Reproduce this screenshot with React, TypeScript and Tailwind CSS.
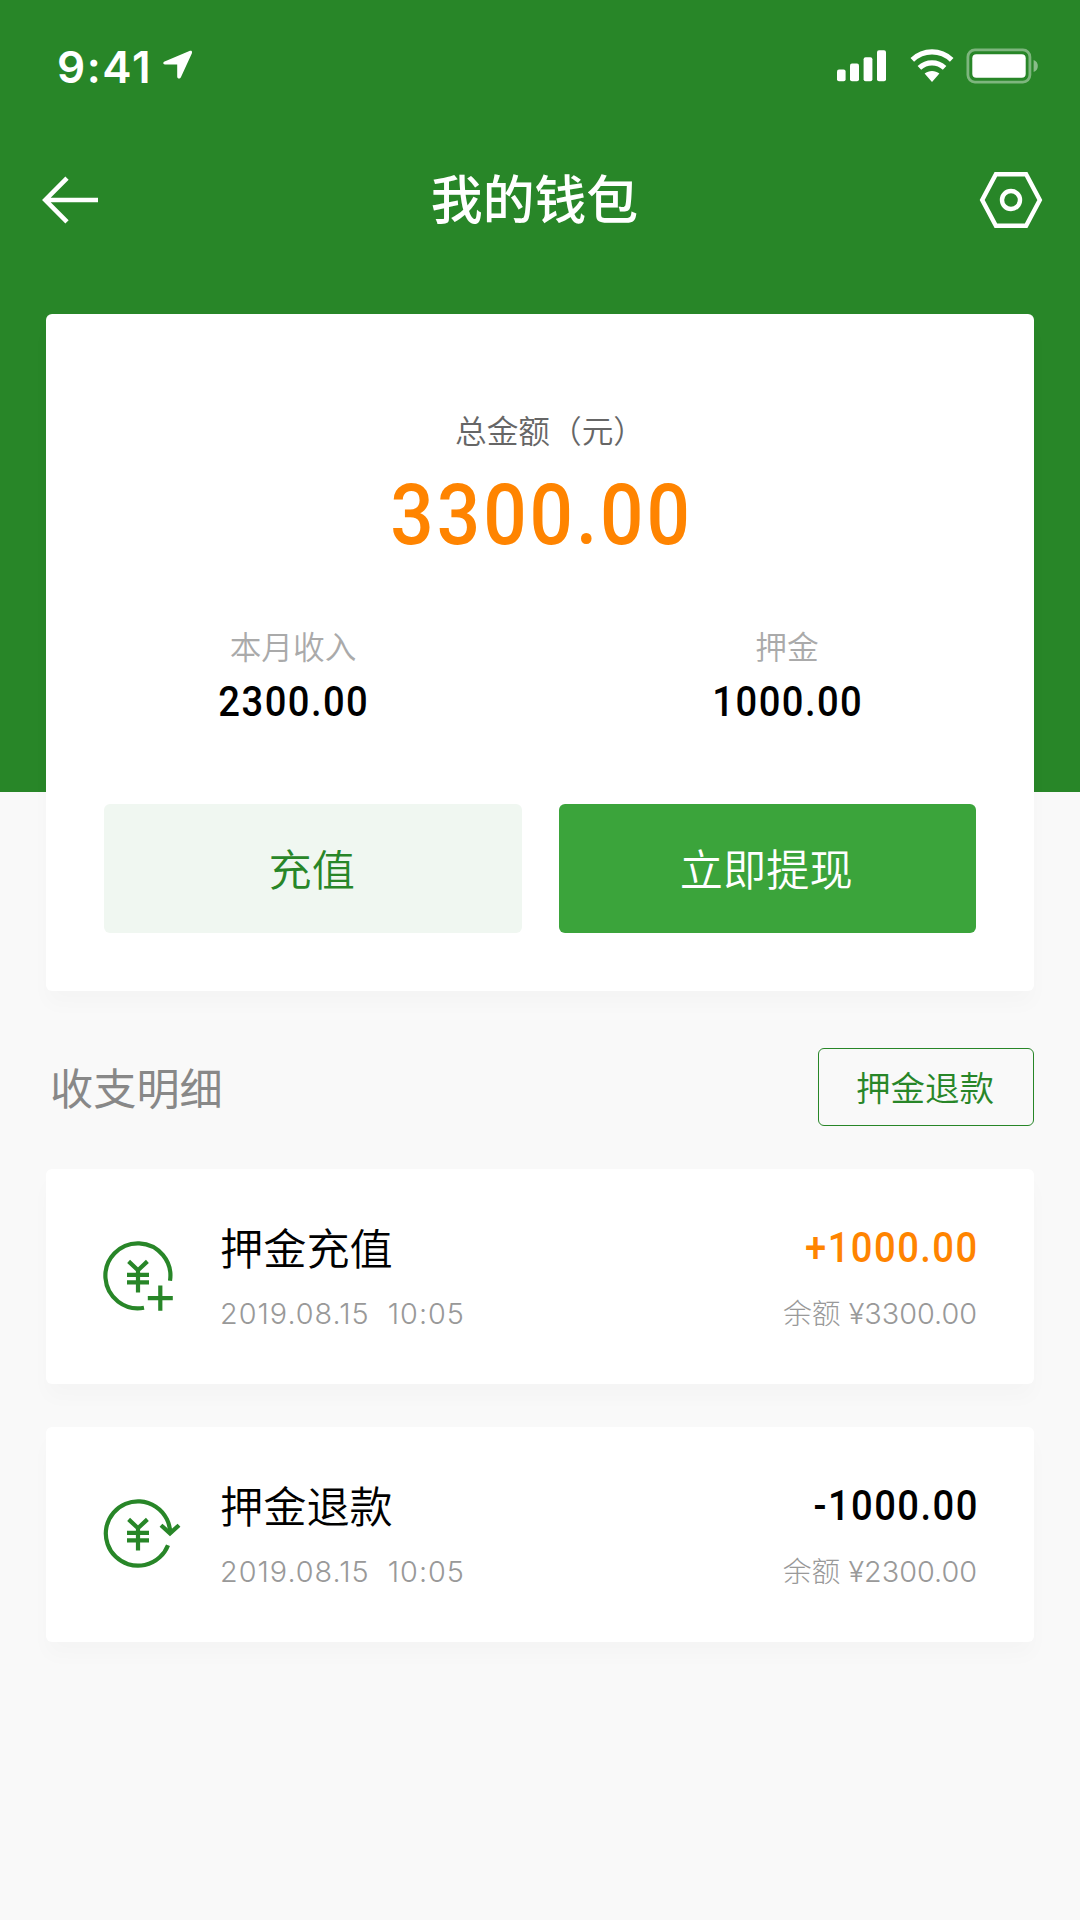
import React from 'react';

interface RecordItem {
  id: number;
  type: 'recharge' | 'refund';
  title: string;
  time: string;
  amount: string;
  balance: string;
}

const records: RecordItem[] = [
  { id: 1, type: 'recharge', title: '押金充值', time: '2019.08.15  10:05', amount: '+1000.00', balance: '3300.00' },
  { id: 2, type: 'refund', title: '押金退款', time: '2019.08.15  10:05', amount: '-1000.00', balance: '2300.00' },
];

// Condensed figures for money values
function Money({ value, className }: { value: string; className: string }) {
  return (
    <p className={`-mr-[0.038em] scale-x-90 font-['Roboto',sans-serif] font-medium tracking-[0.038em] ${className}`}>
      {value}
    </p>
  );
}

function StatusBar() {
  return (
    <div className="flex h-[132px] items-center justify-between pl-[57px] pr-[42px]">
      <div className="flex items-center gap-[12px]">
        <span className="w-[94px] pt-px font-['Inter','Noto_Sans_CJK_SC',sans-serif] text-[44px] leading-[44px] font-semibold tracking-[1.6px] whitespace-nowrap">9:41</span>
        <svg width="30" height="30" viewBox="0 0 30 30" fill="currentColor" className="mb-[2px]">
          <path d="M27 .8 1.6 11.4C-.3 12.3-.1 14.4 1.9 14.4H14.2V26.4C14.2 28.8 16.9 29.3 17.9 27.2L28.8 3.4C29.5 1.4 28.6.2 27 .8Z" />
        </svg>
      </div>
      <div className="flex items-center">
        <svg width="50" height="32" viewBox="0 0 50 32" fill="currentColor">
          <rect x="0" y="19.5" width="8.6" height="11.8" rx="2" />
          <rect x="13" y="13.5" width="9" height="17.8" rx="2" />
          <rect x="26.6" y="7.3" width="8.8" height="24" rx="2" />
          <rect x="40" y="0.2" width="9" height="31.1" rx="2" />
        </svg>
        <svg width="44" height="34" viewBox="0 0 44 34" fill="none" stroke="currentColor" strokeWidth="5.2" className="ml-[23px]">
          <path d="M2.3 10.8C13.5 .2 30.5 .2 41.7 10.8" />
          <path d="M9.4 18.9C16.6 12.2 27.4 12.2 34.6 18.9" />
          <path d="M14.6 24.6C18.8 21.1 25.2 21.1 29.4 24.6L22 33Z" fill="currentColor" stroke="none" />
        </svg>
        <svg width="72" height="36" viewBox="0 0 72 36" fill="none" className="ml-[12px]">
          <rect x="1.9" y="1.9" width="62" height="32.2" rx="7" stroke="currentColor" strokeWidth="2.8" opacity=".4" />
          <rect x="6.3" y="6.2" width="53.4" height="23.6" rx="4" fill="currentColor" />
          <path d="M67.6 12C70.4 13 71.8 15.3 71.8 18S70.4 23 67.6 24Z" fill="currentColor" opacity=".45" />
        </svg>
      </div>
    </div>
  );
}

function NavBar() {
  return (
    <div className="flex h-[135px] items-center justify-between pl-[41px] pr-[36px]">
      <svg width="58" height="50" viewBox="0 0 58 50" fill="none" stroke="currentColor" strokeWidth="4.6">
        <path d="M26 3.2 4.3 25 26 46.8M4.3 25H57" />
      </svg>
      <h1 className="mr-[8px] pb-[5px] text-[51.84px] leading-[60px] font-medium">我的钱包</h1>
      <svg width="66" height="60" viewBox="0 0 66 60" fill="none" stroke="currentColor" strokeWidth="4.4">
        <path d="M17.9 4.2H48.1L61.8 30 48.1 55.8H17.9L4.2 30Z" />
        <circle cx="33" cy="30" r="9" />
      </svg>
    </div>
  );
}

function RecordIcon({ type }: { type: RecordItem['type'] }) {
  return (
    <svg width="80" height="72" viewBox="0 0 80 72" fill="none" stroke="#288628" strokeWidth="4.2">
      <path d="M25.6 21.4 35 30.2 44.4 21.4M35 30.2V52.4M24 34.8H46M24 42.4H46" />
      {type === 'recharge' ? (
        <>
          <path d="M67 40.8A32.5 32.5 0 1 0 41 67.7" />
          <path d="M57.3 45.5V70.7M44.8 58.2H69.8" />
        </>
      ) : (
        <>
          <path d="M67.2 35.5A32.2 32.2 0 1 0 65 47.2" />
          <path d="M58 27.2 67 35.4 76 27.2" />
        </>
      )}
    </svg>
  );
}

function RecordCard({ item }: { item: RecordItem }) {
  const isIncome = item.type === 'recharge';

  return (
    <div className="flex h-[215px] rounded-[6px] bg-white pr-[57px] pl-[57px] pt-[51px] shadow-[0_14px_20px_rgba(0,0,0,0.02)]">
      <div className="mt-[20px] w-[117px]">
        <RecordIcon type={item.type} />
      </div>
      <div className="flex-1">
        <p className="text-[43.2px] leading-[52px] font-[350] text-black">{item.title}</p>
        <p className="mt-[24px] font-['Inter','Noto_Sans_CJK_SC',sans-serif] text-[28.8px] leading-[36px] font-light tracking-[1px] whitespace-pre text-[#999]">{item.time}</p>
      </div>
      <div className="text-right">
        <Money
          value={item.amount}
          className={`origin-right pt-[2px] text-[42.4px] leading-[52px] ${isIncome ? 'text-[#ff8400]' : 'text-black'}`}
        />
        <p className="mt-[22px] font-['Inter','Noto_Sans_CJK_SC',sans-serif] text-[28.8px] leading-[36px] font-light text-[#999]">余额 ¥{item.balance}</p>
      </div>
    </div>
  );
}

export default function App() {
  return (
    <div className="h-[1920px] w-[1080px] overflow-hidden bg-[#f9f9f9] font-['Noto_Sans_CJK_SC',sans-serif]">
      <header className="h-[792px] bg-[#288628] text-white">
        <StatusBar />
        <NavBar />
      </header>

      <main className="relative -mt-[478px] px-[46px]">
        {/* 余额 */}
        <section className="h-[677px] rounded-[6px] bg-white px-[58px] pt-[91px] shadow-[0_14px_20px_rgba(0,0,0,0.02)]">
          <p className="pl-[20px] text-center text-[31.68px] leading-[48px] font-[350] text-[#666]">总金额（元）</p>
          <Money value="3300.00" className="mt-[12px] text-center text-[85px] leading-[100px] text-[#ff8400]" />

          <div className="-mx-[58px] mt-[56px] grid grid-cols-2 text-center">
            <div>
              <p className="text-[31.68px] leading-[48px] font-[350] text-[#aaa]">本月收入</p>
              <Money value="2300.00" className="mt-[8px] text-[42.4px] leading-[50px] text-black" />
            </div>
            <div>
              <p className="text-[31.68px] leading-[48px] font-[350] text-[#aaa]">押金</p>
              <Money value="1000.00" className="mt-[8px] text-[42.4px] leading-[50px] text-black" />
            </div>
          </div>

          <div className="mt-[77px] grid grid-cols-2 gap-[37px]">
            <button className="h-[129px] rounded-[6px] bg-[#f0f7f1] pr-[2px] pb-[2px] text-[43.2px] font-[350] text-[#288628]">充值</button>
            <button className="h-[129px] rounded-[6px] bg-[#3ba43b] pr-[2px] pb-[2px] text-[43.2px] font-[350] text-white">立即提现</button>
          </div>
        </section>

        {/* 收支明细 */}
        <div className="mt-[57px] flex h-[78px] items-center justify-between pl-[4px]">
          <h2 className="pb-[2px] text-[43.2px] font-normal text-[#888]">收支明细</h2>
          <button className="h-[78px] w-[216px] rounded-[6px] border-[1.5px] border-[#288628] pr-[2px] pb-px text-[34.56px] font-[350] text-[#288628]">押金退款</button>
        </div>

        <div className="mt-[43px] flex flex-col gap-[43px]">
          {records.map((item) => (
            <RecordCard key={item.id} item={item} />
          ))}
        </div>
      </main>
    </div>
  );
}
